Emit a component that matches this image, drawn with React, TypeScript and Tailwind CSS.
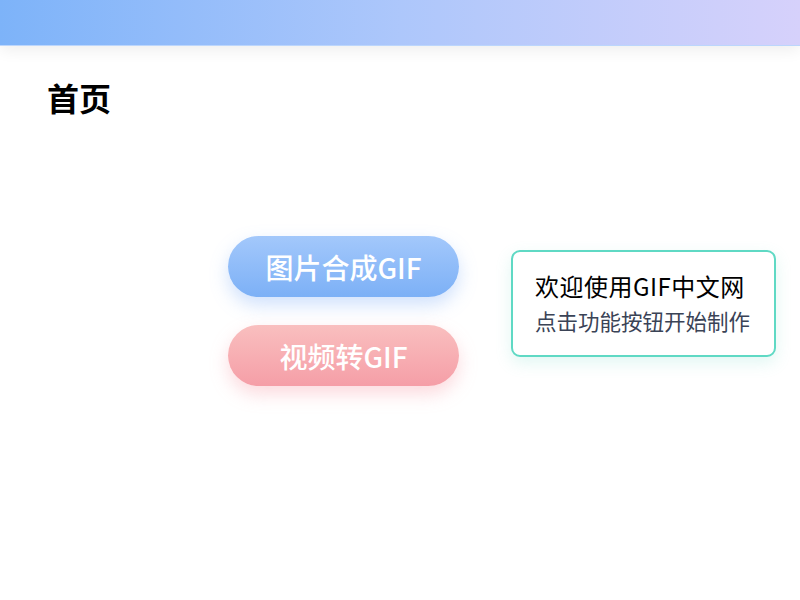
const CJK = "font-['Noto_Sans_CJK_SC','Noto_Sans',sans-serif]";

function ActionButton({ label, tone }: { label: string; tone: "blue" | "pink" }) {
  const styles =
    tone === "blue"
      ? "bg-gradient-to-b from-[#a3c8fb] to-[#7cb0f6] shadow-[0_8px_18px_rgba(120,170,245,0.35)]"
      : "bg-gradient-to-b from-[#f9bfbf] to-[#f59ea7] shadow-[0_8px_18px_rgba(245,150,160,0.35)]";
  return (
    <button
      className={`flex h-[61px] w-[231px] items-center justify-center rounded-full text-[28px] font-medium text-white ${styles}`}
    >
      {label}
    </button>
  );
}

export default function App() {
  return (
    <div className={`h-[600px] w-[800px] overflow-hidden bg-white ${CJK}`}>
      <header className="h-[46px] border-b border-[#bcd6fc] bg-gradient-to-r from-[#7db3f9] via-[#adc7fb] to-[#d6d1fb] shadow-[0_4px_16px_rgba(0,0,0,0.07)]" />

      <h1 className="ml-[47px] mt-[31px] text-[32px] font-bold leading-[40px] text-black">首页</h1>

      <div className="mt-[119px] flex items-center pl-[228px]">
        <div className="flex flex-col gap-[28px]">
          <ActionButton label="图片合成GIF" tone="blue" />
          <ActionButton label="视频转GIF" tone="pink" />
        </div>

        <div className="mb-[16px] ml-[52px] h-[107px] w-[265px] rounded-[9px] border-2 border-[#5fd9c4] bg-white pl-[22px] pt-[17px] shadow-[0_6px_16px_rgba(90,210,190,0.18)]">
          <p className="text-[24px] leading-[34px] tracking-[0.5px] text-black">欢迎使用GIF中文网</p>
          <p className="mt-[3px] text-[21.5px] leading-[30px] text-[#3a4356]">点击功能按钮开始制作</p>
        </div>
      </div>
    </div>
  );
}
